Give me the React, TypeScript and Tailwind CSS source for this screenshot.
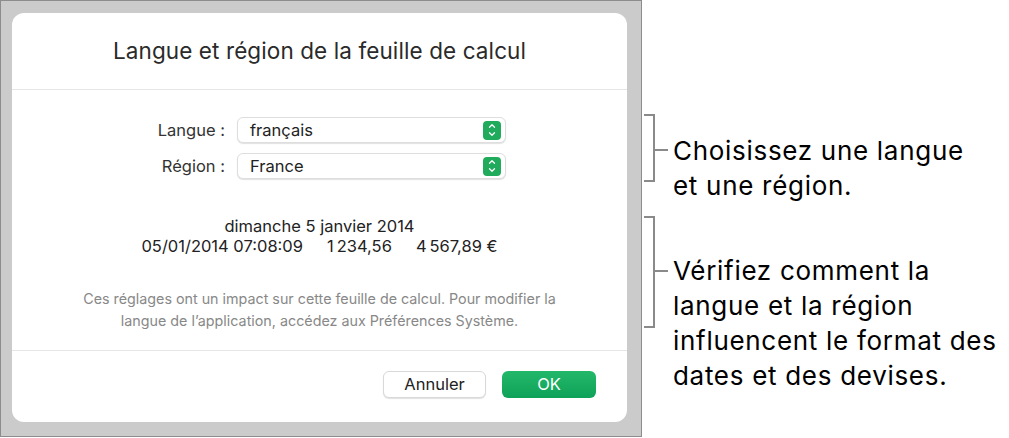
import { ChevronUp, ChevronDown } from "lucide-react";

function Stepper() {
    return (
        <div className="w-[18px] h-[19px] rounded-[4px] bg-[#1faa5c] flex flex-col items-center justify-center text-white">
            <ChevronUp size={10} strokeWidth={3} className="-mb-[2px]" />
            <ChevronDown size={10} strokeWidth={3} />
        </div>
    );
}

function SelectRow({ label, value }: { label: string; value: string }) {
    return (
        <div className="flex items-center">
            <div className="w-[132px] text-right pr-[12px] text-[16.5px] text-[#333]">{label}</div>
            <div className="w-[269px] h-[26px] rounded-[6px] bg-white border border-[#dedede] shadow-[0_1px_1px_rgba(0,0,0,0.12)] flex items-center justify-between pl-[12px] pr-[4px]">
                <span className="text-[16.5px] text-[#222]">{value}</span>
                <Stepper />
            </div>
        </div>
    );
}

function Bracket({ height, tick }: { height: number; tick: number }) {
    return (
        <svg width="26" height={height} className="shrink-0">
            <path d={`M2 1 H12 V${height - 1} H2`} fill="none" stroke="#8a8a8a" strokeWidth="2" />
            <path d={`M12 ${tick} H26`} fill="none" stroke="#8a8a8a" strokeWidth="2" />
        </svg>
    );
}

export default function App() {
    return (
        <div className="w-[1009px] h-[438px] bg-white flex font-['Inter',sans-serif]">
            {/* Grey panel with dialog */}
            <div className="w-[642px] h-[437px] bg-[#cbcbcb] border border-[#8c8c8c] pt-[12px] pl-[11px]">
                <div className="w-[615px] h-[409px] bg-white rounded-[12px] flex flex-col">
                    <div className="h-[77px] flex items-center justify-center text-[22.5px] text-[#2a2a2a] border-b border-[#e6e6e6] tracking-[0.1px]">
                        Langue et région de la feuille de calcul
                    </div>
                    <div className="flex-1 flex flex-col border-b border-[#e6e6e6]">
                        <div className="mt-[27px] flex flex-col gap-[10px] pl-[93px]">
                            <SelectRow label="Langue :" value="français" />
                            <SelectRow label="Région :" value="France" />
                        </div>
                        <div className="mt-[37px] text-[16.5px] text-[#222] leading-[20px] flex flex-col items-center">
                            <div>dimanche 5 janvier 2014</div>
                            <div className="flex gap-[24px]">
                                <span>05/01/2014 07:08:09</span>
                                <span>1{"\u202F"}234,56</span>
                                <span>4{"\u202F"}567,89{"\u00A0"}€</span>
                            </div>
                        </div>
                        <div className="mt-[32px] text-[14.3px] text-[#888] text-center leading-[22px]">
                            Ces réglages ont un impact sur cette feuille de calcul. Pour modifier la
                            <br />
                            langue de l’application, accédez aux Préférences Système.
                        </div>
                    </div>
                    <div className="h-[71px] flex items-start justify-end gap-[16px] pr-[31px] pt-[20px]">
                        <button className="w-[103px] h-[27px] rounded-[6px] bg-white border border-[#d9d9d9] shadow-[0_1px_1px_rgba(0,0,0,0.12)] text-[16.5px] text-[#222]">
                            Annuler
                        </button>
                        <button className="w-[94px] h-[27px] rounded-[6px] bg-gradient-to-b from-[#22b86a] to-[#0ea259] text-[16.5px] text-white">
                            OK
                        </button>
                    </div>
                </div>
            </div>
            {/* Callouts */}
            <div className="flex flex-col font-['Inter',sans-serif] text-[26px] tracking-[0.7px] text-black leading-[35px]">
                <div className="mt-[114px] flex items-start">
                    <Bracket height={68} tick={36} />
                    <div className="pl-[5px] mt-[19px]">
                        Choisissez une langue
                        <br />
                        et une région.
                    </div>
                </div>
                <div className="mt-[13px] flex items-start">
                    <Bracket height={112} tick={55} />
                    <div className="pl-[5px] mt-[37px]">
                        Vérifiez comment la
                        <br />
                        langue et la région
                        <br />
                        influencent le format des
                        <br />
                        dates et des devises.
                    </div>
                </div>
            </div>
        </div>
    );
}
